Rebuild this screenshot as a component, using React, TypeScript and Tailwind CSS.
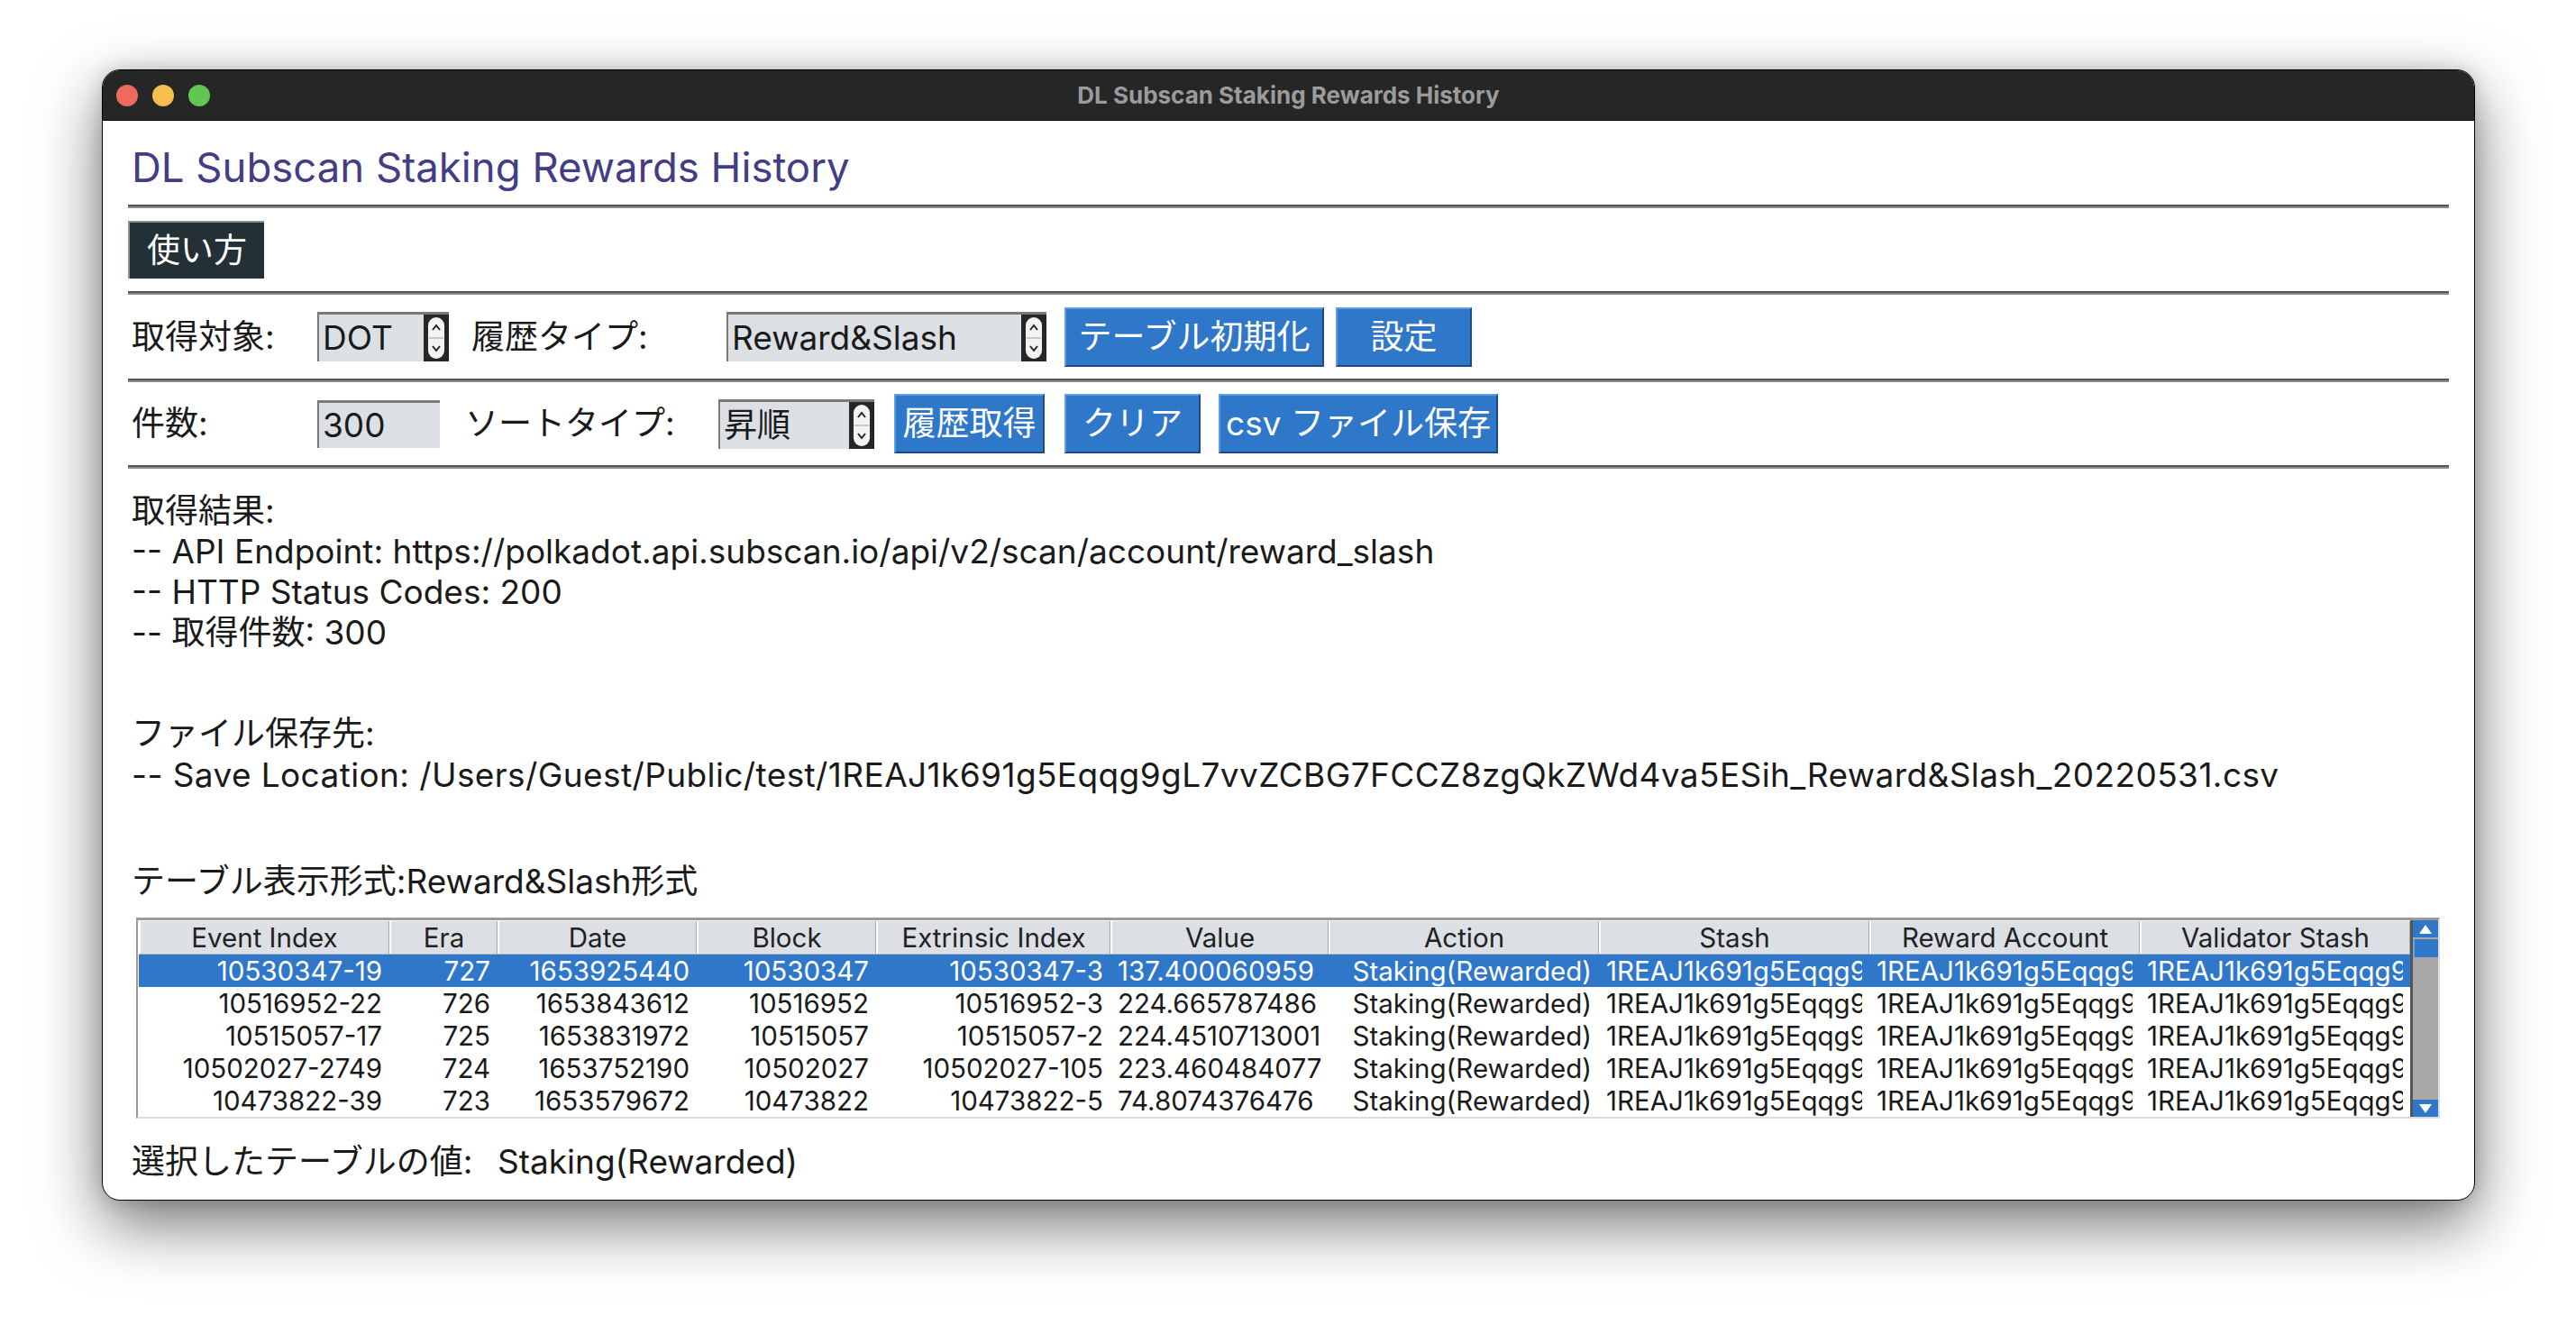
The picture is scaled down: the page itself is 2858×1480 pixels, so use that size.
import React from "react";

const FONT = "font-['Inter','Noto_Sans_CJK_JP',sans-serif]";

function Stepper() {
  return (
    <div className="flex h-full w-[28px] shrink-0 items-center justify-center bg-[#262626]">
      <svg width="22" height="48" viewBox="0 0 22 48">
        <rect x="2" y="1" width="18" height="46" rx="9" fill="#f2f2f2" />
        <line x1="3" y1="24" x2="19" y2="24" stroke="#b8b8b8" strokeWidth="1.5" />
        <path d="M7 15 L11 10 L15 15" fill="none" stroke="#222" strokeWidth="2" />
        <path d="M7 33 L11 38 L15 33" fill="none" stroke="#222" strokeWidth="2" />
      </svg>
    </div>
  );
}

function Spinbox({ value, w }: { value: string; w: string }) {
  return (
    <div className={`flex h-[55px] shrink-0 border-l-2 border-t-[3px] border-[#7a7a7a] bg-[#dce0e5] ${w}`}>
      <div className="flex flex-1 items-center overflow-hidden whitespace-nowrap pl-[4px] text-[37px] text-[#1a1a1a]">
        {value}
      </div>
      <Stepper />
    </div>
  );
}

function BlueButton({ label, w, ml }: { label: string; w: string; ml: string }) {
  return (
    <button
      type="button"
      className={`flex h-[66px] shrink-0 items-center justify-center whitespace-nowrap border-2 border-l-[#5d9de0] border-t-[#5d9de0] border-b-[#1b4a86] border-r-[#1b4a86] bg-[#2f77c9] text-[37px] text-white ${w} ${ml}`}
    >
      {label}
    </button>
  );
}

function Rule() {
  return <div className="h-[4px] w-full border-b-2 border-t-2 border-b-[#8a8a8a] border-t-[#555555]" />;
}

type Col = { name: string; w: string; align: "right" | "left" };

const cols: Col[] = [
  { name: "Event Index", w: "w-[278px]", align: "right" },
  { name: "Era", w: "w-[120px]", align: "right" },
  { name: "Date", w: "w-[221px]", align: "right" },
  { name: "Block", w: "w-[199px]", align: "right" },
  { name: "Extrinsic Index", w: "w-[260px]", align: "right" },
  { name: "Value", w: "w-[242px]", align: "left" },
  { name: "Action", w: "w-[300px]", align: "right" },
  { name: "Stash", w: "w-[300px]", align: "left" },
  { name: "Reward Account", w: "w-[300px]", align: "left" },
  { name: "Validator Stash", w: "w-[300px]", align: "left" },
];

const ADDR = "1REAJ1k691g5Eqqg9gL7vvZCBG7FCCZ8zgQkZWd4va5ESih";

const rows: string[][] = [
  ["10530347-19", "727", "1653925440", "10530347", "10530347-3", "137.400060959", "Staking(Rewarded)", ADDR, ADDR, ADDR],
  ["10516952-22", "726", "1653843612", "10516952", "10516952-3", "224.665787486", "Staking(Rewarded)", ADDR, ADDR, ADDR],
  ["10515057-17", "725", "1653831972", "10515057", "10515057-2", "224.45107130011", "Staking(Rewarded)", ADDR, ADDR, ADDR],
  ["10502027-2749", "724", "1653752190", "10502027", "10502027-105", "223.460484077", "Staking(Rewarded)", ADDR, ADDR, ADDR],
  ["10473822-39", "723", "1653579672", "10473822", "10473822-5", "74.8074376476", "Staking(Rewarded)", ADDR, ADDR, ADDR],
];

function Table() {
  return (
    <div className="ml-[9px] mt-[18px] flex w-[2556px] border-b-2 border-l-2 border-r-2 border-t-[3px] border-b-[#dcdcdc] border-l-[#9b9b9b] border-r-[#dcdcdc] border-t-[#9b9b9b] bg-white">
      <div className="flex flex-col pl-[1px] pt-[1px]">
        <div className="flex h-[37px] border-b border-[#b9b9b9]">
          {cols.map((c) => (
            <div
              key={c.name}
              className={`flex h-full items-center justify-center border-l-2 border-r border-l-white border-r-[#a9a9a9] bg-[#dce0e5] text-[29.5px] text-[#222] ${c.w}`}
            >
              {c.name}
            </div>
          ))}
        </div>
        {rows.map((r, i) => (
          <div key={i} className={`flex h-[36px] ${i === 0 ? "bg-[#2f77c9] text-white" : "bg-white text-[#1a1a1a]"}`}>
            {r.map((v, j) => (
              <div
                key={j}
                className={`flex h-full min-w-0 shrink-0 items-center overflow-hidden whitespace-nowrap px-[8px] text-[29.5px] ${cols[j].w} ${
                  cols[j].align === "right" ? "justify-end" : "justify-start"
                }`}
              >
                <span className="block min-w-0 overflow-hidden">{v}</span>
              </div>
            ))}
          </div>
        ))}
      </div>
      <div className="flex w-[31px] flex-col border-l-[3px] border-[#555] bg-[#a8a8a8]">
        <div className="flex h-[19px] items-center justify-center bg-[#2f77c9]">
          <svg width="16" height="12" viewBox="0 0 16 12">
            <path d="M8 1 L15 11 L1 11 Z" fill="white" />
          </svg>
        </div>
        <div className="mt-[2px] h-[20px] border-l-2 border-[#6aa3e3] bg-[#2f77c9]" />
        <div className="flex-1" />
        <div className="flex h-[19px] items-center justify-center bg-[#2f77c9]">
          <svg width="16" height="12" viewBox="0 0 16 12">
            <path d="M1 1 L15 1 L8 11 Z" fill="white" />
          </svg>
        </div>
      </div>
    </div>
  );
}

export default function App() {
  return (
    <div className={`min-h-screen w-full bg-white ${FONT}`}>
      <div className="pl-[113px] pt-[77px]">
        <div className="flex h-[1255px] w-[2633px] flex-col overflow-hidden rounded-[20px] border border-black bg-white shadow-[0_26px_70px_rgba(0,0,0,0.55),0_0_20px_rgba(0,0,0,0.15)]">
          {/* Title bar */}
          <div className="grid h-[56px] shrink-0 grid-cols-[1fr_auto_1fr] items-center border-b border-black bg-[#262626]">
            <div className="flex items-center gap-[16px] pl-[15px]">
              <div className="h-[24px] w-[24px] rounded-full bg-[#ee6a5f]" />
              <div className="h-[24px] w-[24px] rounded-full bg-[#f5be4f]" />
              <div className="h-[24px] w-[24px] rounded-full bg-[#62c554]" />
            </div>
            <div className="text-[26px] font-bold text-[#9b9b9b]">DL Subscan Staking Rewards History</div>
            <div />
          </div>

          {/* Content */}
          <div className="flex flex-col px-[28px] text-[#1a1a1a]">
            <div className="mt-[25px] pl-[4px] text-[45.5px] leading-[53px] text-[#433d85]">
              DL Subscan Staking Rewards History
            </div>
            <div className="mt-[15px]">
              <Rule />
            </div>
            <div className="mt-[14px] flex">
              <button
                type="button"
                className="flex h-[64px] w-[151px] items-center justify-center border-l-2 border-t-2 border-[#8a9296] bg-[#233035] text-[37px] text-white"
              >
                使い方
              </button>
            </div>
            <div className="mt-[14px]">
              <Rule />
            </div>

            {/* Row 1 */}
            <div className="mt-[13px] flex h-[67px] items-center text-[37px]">
              <div className="w-[210px] shrink-0 pl-[4px]">取得対象:</div>
              <Spinbox value="DOT" w="w-[146px]" />
              <div className="ml-[25px] w-[283px] shrink-0">履歴タイプ:</div>
              <Spinbox value="Reward&Slash" w="w-[355px]" />
              <BlueButton label="テーブル初期化" w="w-[288px]" ml="ml-[20px]" />
              <BlueButton label="設定" w="w-[151px]" ml="ml-[13px]" />
            </div>
            <div className="mt-[13px]">
              <Rule />
            </div>

            {/* Row 2 */}
            <div className="mt-[13px] flex h-[66px] items-center text-[37px]">
              <div className="w-[210px] shrink-0 pl-[4px]">件数:</div>
              <div className="flex h-[53px] w-[136px] shrink-0 items-center border-l-2 border-t-[3px] border-[#7a7a7a] bg-[#dce0e5] pl-[4px]">
                300
              </div>
              <div className="ml-[28px] w-[281px] shrink-0">ソートタイプ:</div>
              <Spinbox value="昇順" w="w-[173px]" />
              <BlueButton label="履歴取得" w="w-[167px]" ml="ml-[22px]" />
              <BlueButton label="クリア" w="w-[151px]" ml="ml-[22px]" />
              <BlueButton label="csv ファイル保存" w="w-[310px]" ml="ml-[20px]" />
            </div>
            <div className="mt-[13px]">
              <Rule />
            </div>

            {/* Results */}
            <div className="mt-[24px] pl-[4px] text-[37px] leading-[45px]">
              <div>取得結果:</div>
              <div>-- API Endpoint: https://polkadot.api.subscan.io/api/v2/scan/account/reward_slash</div>
              <div>-- HTTP Status Codes: 200</div>
              <div>-- 取得件数: 300</div>
            </div>
            <div className="mt-[67px] pl-[4px] text-[37px] leading-[46px]">
              <div>ファイル保存先:</div>
              <div className="tracking-[0.4px]">
                -- Save Location: /Users/Guest/Public/test/1REAJ1k691g5Eqqg9gL7vvZCBG7FCCZ8zgQkZWd4va5ESih_Reward&amp;Slash_20220531.csv
              </div>
            </div>
            <div className="mt-[72px] pl-[4px] text-[37px] leading-[45px]">テーブル表示形式:Reward&amp;Slash形式</div>

            <Table />

            <div className="mt-[25px] flex pl-[4px] text-[37px] leading-[45px]">
              <div className="w-[406px] shrink-0">選択したテーブルの値:</div>
              <div>Staking(Rewarded)</div>
            </div>
          </div>
        </div>
      </div>
    </div>
  );
}
